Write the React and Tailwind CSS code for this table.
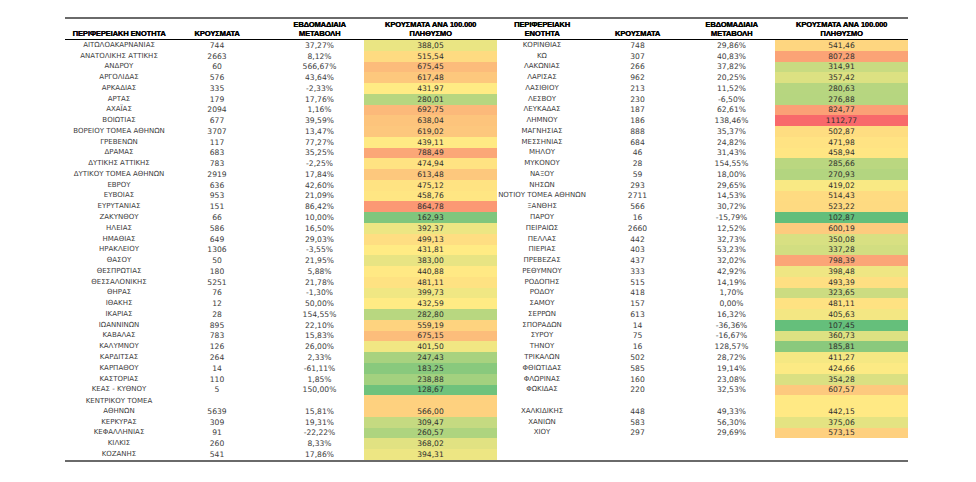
import React from 'react'

const left = [
  ['ΑΙΤΩΛΟΑΚΑΡΝΑΝΙΑΣ', '744', '37,27%', '388,05'],
  ['ΑΝΑΤΟΛΙΚΗΣ ΑΤΤΙΚΗΣ', '2663', '8,12%', '515,54'],
  ['ΑΝΔΡΟΥ', '60', '566,67%', '675,45'],
  ['ΑΡΓΟΛΙΔΑΣ', '576', '43,64%', '617,48'],
  ['ΑΡΚΑΔΙΑΣ', '335', '-2,33%', '431,97'],
  ['ΑΡΤΑΣ', '179', '17,76%', '280,01'],
  ['ΑΧΑΪΑΣ', '2094', '1,16%', '692,75'],
  ['ΒΟΙΩΤΙΑΣ', '677', '39,59%', '638,04'],
  ['ΒΟΡΕΙΟΥ ΤΟΜΕΑ ΑΘΗΝΩΝ', '3707', '13,47%', '619,02'],
  ['ΓΡΕΒΕΝΩΝ', '117', '77,27%', '439,11'],
  ['ΔΡΑΜΑΣ', '683', '35,25%', '788,49'],
  ['ΔΥΤΙΚΗΣ ΑΤΤΙΚΗΣ', '783', '-2,25%', '474,94'],
  ['ΔΥΤΙΚΟΥ ΤΟΜΕΑ ΑΘΗΝΩΝ', '2919', '17,84%', '613,48'],
  ['ΕΒΡΟΥ', '636', '42,60%', '475,12'],
  ['ΕΥΒΟΙΑΣ', '953', '21,09%', '458,76'],
  ['ΕΥΡΥΤΑΝΙΑΣ', '151', '86,42%', '864,78'],
  ['ΖΑΚΥΝΘΟΥ', '66', '10,00%', '162,93'],
  ['ΗΛΕΙΑΣ', '586', '16,50%', '392,37'],
  ['ΗΜΑΘΙΑΣ', '649', '29,03%', '499,13'],
  ['ΗΡΑΚΛΕΙΟΥ', '1306', '-3,55%', '431,81'],
  ['ΘΑΣΟΥ', '50', '21,95%', '383,00'],
  ['ΘΕΣΠΡΩΤΙΑΣ', '180', '5,88%', '440,88'],
  ['ΘΕΣΣΑΛΟΝΙΚΗΣ', '5251', '21,78%', '481,11'],
  ['ΘΗΡΑΣ', '76', '-1,30%', '399,73'],
  ['ΙΘΑΚΗΣ', '12', '50,00%', '432,59'],
  ['ΙΚΑΡΙΑΣ', '28', '154,55%', '282,80'],
  ['ΙΩΑΝΝΙΝΩΝ', '895', '22,10%', '559,19'],
  ['ΚΑΒΑΛΑΣ', '783', '15,83%', '675,15'],
  ['ΚΑΛΥΜΝΟΥ', '126', '26,00%', '401,50'],
  ['ΚΑΡΔΙΤΣΑΣ', '264', '2,33%', '247,43'],
  ['ΚΑΡΠΑΘΟΥ', '14', '-61,11%', '183,25'],
  ['ΚΑΣΤΟΡΙΑΣ', '110', '1,85%', '238,88'],
  ['ΚΕΑΣ - ΚΥΘΝΟΥ', '5', '150,00%', '128,67'],
  ['ΚΕΝΤΡΙΚΟΥ ΤΟΜΕΑ\nΑΘΗΝΩΝ', '5639', '15,81%', '566,00'],
  ['ΚΕΡΚΥΡΑΣ', '309', '19,31%', '309,47'],
  ['ΚΕΦΑΛΛΗΝΙΑΣ', '91', '-22,22%', '260,57'],
  ['ΚΙΛΚΙΣ', '260', '8,33%', '368,02'],
  ['ΚΟΖΑΝΗΣ', '541', '17,86%', '394,31'],
]

const right = [
  ['ΚΟΡΙΝΘΙΑΣ', '748', '29,86%', '541,46'],
  ['ΚΩ', '307', '40,83%', '807,28'],
  ['ΛΑΚΩΝΙΑΣ', '266', '37,82%', '314,91'],
  ['ΛΑΡΙΣΑΣ', '962', '20,25%', '357,42'],
  ['ΛΑΣΙΘΙΟΥ', '213', '11,52%', '280,63'],
  ['ΛΕΣΒΟΥ', '230', '-6,50%', '276,88'],
  ['ΛΕΥΚΑΔΑΣ', '187', '62,61%', '824,77'],
  ['ΛΗΜΝΟΥ', '186', '138,46%', '1112,77'],
  ['ΜΑΓΝΗΣΙΑΣ', '888', '35,37%', '502,87'],
  ['ΜΕΣΣΗΝΙΑΣ', '684', '24,82%', '471,98'],
  ['ΜΗΛΟΥ', '46', '31,43%', '458,94'],
  ['ΜΥΚΟΝΟΥ', '28', '154,55%', '285,66'],
  ['ΝΑΞΟΥ', '59', '18,00%', '270,93'],
  ['ΝΗΣΩΝ', '293', '29,65%', '419,02'],
  ['ΝΟΤΙΟΥ ΤΟΜΕΑ ΑΘΗΝΩΝ', '2711', '14,53%', '514,43'],
  ['ΞΑΝΘΗΣ', '566', '30,72%', '523,22'],
  ['ΠΑΡΟΥ', '16', '-15,79%', '102,87'],
  ['ΠΕΙΡΑΙΩΣ', '2660', '12,52%', '600,19'],
  ['ΠΕΛΛΑΣ', '442', '32,73%', '350,08'],
  ['ΠΙΕΡΙΑΣ', '403', '53,23%', '337,28'],
  ['ΠΡΕΒΕΖΑΣ', '437', '32,02%', '798,39'],
  ['ΡΕΘΥΜΝΟΥ', '333', '42,92%', '398,48'],
  ['ΡΟΔΟΠΗΣ', '515', '14,19%', '493,39'],
  ['ΡΟΔΟΥ', '418', '1,70%', '323,65'],
  ['ΣΑΜΟΥ', '157', '0,00%', '481,11'],
  ['ΣΕΡΡΩΝ', '613', '16,32%', '405,63'],
  ['ΣΠΟΡΑΔΩΝ', '14', '-36,36%', '107,45'],
  ['ΣΥΡΟΥ', '75', '-16,67%', '360,73'],
  ['ΤΗΝΟΥ', '16', '128,57%', '185,81'],
  ['ΤΡΙΚΑΛΩΝ', '502', '28,72%', '411,27'],
  ['ΦΘΙΩΤΙΔΑΣ', '585', '19,14%', '424,66'],
  ['ΦΛΩΡΙΝΑΣ', '160', '23,08%', '354,28'],
  ['ΦΩΚΙΔΑΣ', '220', '32,53%', '607,57'],
  ['ΧΑΛΚΙΔΙΚΗΣ', '448', '49,33%', '442,15'],
  ['ΧΑΝΙΩΝ', '583', '56,30%', '375,06'],
  ['ΧΙΟΥ', '297', '29,69%', '573,15'],
]

// excel-like 3 colour scale: green / yellow (median) / red
const num = s => parseFloat(s.replace(',', '.'))
const all = [...left, ...right].map(r => num(r[3])).sort((a, b) => a - b)
const min = all[0]
const max = all[all.length - 1]
const mid = (all[all.length / 2 - 1] + all[all.length / 2]) / 2
const green = [99, 190, 123]
const yellow = [255, 235, 132]
const red = [248, 105, 107]

const mix = (a, b, t) => a.map((v, i) => Math.round(v + (b[i] - v) * t))
const scaleColor = s => {
  const v = num(s)
  const c = v <= mid ? mix(green, yellow, (v - min) / (mid - min)) : mix(yellow, red, (v - mid) / (max - mid))
  return `rgb(${c[0]},${c[1]},${c[2]})`
}

const cols = 'grid grid-cols-[108px_88px_103px_133px_90px_101px_87px_133px]'
const cell = 'flex items-end justify-center text-center pb-[0.5px] leading-[9.5px]'
const nameCls = `${cell} whitespace-pre-line text-[7px]`
const numCls = `${cell} text-[7.6px]`

const Half = ({ row, padChange }) => {
  if (!row) {
    return (
      <>
        <div />
        <div />
        <div />
        <div />
      </>
    )
  }
  return (
    <>
      <div className={nameCls}>{row[0]}</div>
      <div className={numCls}>{row[1]}</div>
      <div className={`${numCls} ${padChange ? 'pl-[14px]' : ''}`}>{row[2]}</div>
      <div className={`${numCls} text-[#2e2e2e]`} style={{ backgroundColor: scaleColor(row[3]) }}>
        {row[3]}
      </div>
    </>
  )
}

const HeadHalf = ({ first }) => (
  <>
    <div className={cell}>{first ? 'ΠΕΡΙΦΕΡΕΙΑΚΗ ΕΝΟΤΗΤΑ' : 'ΠΕΡΙΦΕΡΕΙΑΚΗ\nΕΝΟΤΗΤΑ'}</div>
    <div className={cell}>ΚΡΟΥΣΜΑΤΑ</div>
    <div className={`${cell} ${first ? 'pl-[14px]' : ''}`}>{'ΕΒΔΟΜΑΔΙΑΙΑ\nΜΕΤΑΒΟΛΗ'}</div>
    <div className={cell}>{'ΚΡΟΥΣΜΑΤΑ ΑΝΑ 100.000\nΠΛΗΘΥΣΜΟ'}</div>
  </>
)

export default function App() {
  return (
    <div className="w-[976px] h-[482px] bg-white pt-[17px] pl-[65px]">
      <div className="w-[843px] border-t-2 border-b-2 border-[#6a6a6a]">
        <div className={`${cols} h-[21px] border-b border-black whitespace-pre-line font-['Liberation_Sans',sans-serif] font-bold text-[7.6px] tracking-[-0.15px] text-black [text-shadow:0.3px_0_0_#000]`}>
          <HeadHalf first />
          <HeadHalf />
        </div>
        <div className="font-['DejaVu_Sans',sans-serif] text-[#3c3c3c]">
          {left.map((row, i) => (
            <div key={row[0]} className={`${cols} ${i === 33 ? 'h-[21.54px]' : 'h-[10.77px]'}`}>
              <Half row={row} padChange />
              <Half row={right[i]} />
            </div>
          ))}
        </div>
      </div>
    </div>
  )
}
